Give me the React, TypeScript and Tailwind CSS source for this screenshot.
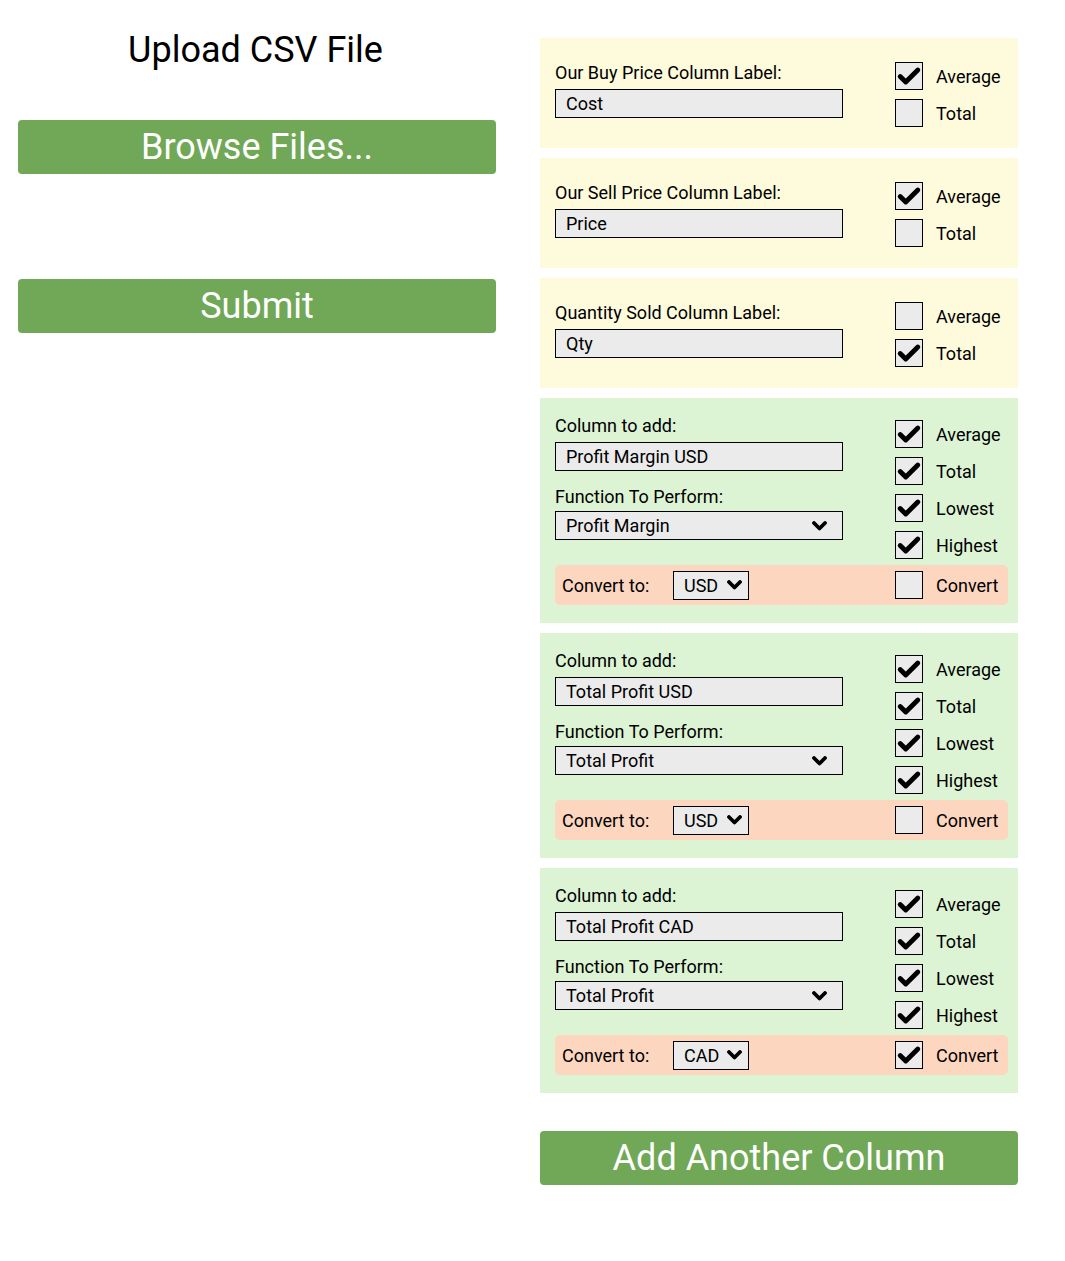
const simpleCols = [
  { label: "Our Buy Price Column Label:", value: "Cost", average: true, total: false },
  { label: "Our Sell Price Column Label:", value: "Price", average: true, total: false },
  { label: "Quantity Sold Column Label:", value: "Qty", average: false, total: true },
];

const addedCols = [
  { name: "Profit Margin USD", fn: "Profit Margin", currency: "USD", convert: false },
  { name: "Total Profit USD", fn: "Total Profit", currency: "USD", convert: false },
  { name: "Total Profit CAD", fn: "Total Profit", currency: "CAD", convert: true },
];

function Tick() {
  return (
    <svg width="28" height="28" viewBox="0 0 28 28" fill="none">
      <path d="M4.5 14.5 L10.5 20.5 L23.5 7.5" stroke="black" strokeWidth="5.2" strokeLinecap="round" strokeLinejoin="round" />
    </svg>
  );
}

function Chevron() {
  return (
    <svg width="15" height="10" viewBox="0 0 15 10" fill="none">
      <path d="M2 2 L7.5 7.5 L13 2" stroke="black" strokeWidth="3.8" strokeLinecap="round" strokeLinejoin="round" />
    </svg>
  );
}

function Check({ label, checked }: { label: string; checked: boolean }) {
  return (
    <div className="flex h-[28px] items-center gap-[13px]">
      <span className="flex h-[28px] w-[28px] items-center justify-center border border-black bg-[#ebebeb]">
        {checked && <Tick />}
      </span>
      <span className="text-[18px] leading-[21px]">{label}</span>
    </div>
  );
}

function TextBox({ value }: { value: string }) {
  return (
    <div className="flex h-[29px] w-[288px] items-center border border-black bg-[#ebebeb] pl-[10px] text-[18px]">
      {value}
    </div>
  );
}

function SelectBox({ value }: { value: string }) {
  return (
    <div className="flex h-[29px] w-[288px] items-center justify-between border border-black bg-[#ebebeb] pl-[10px] pr-[15px] text-[18px]">
      <span>{value}</span>
      <Chevron />
    </div>
  );
}

function GreenButton({ children }: { children: string }) {
  return (
    <button className="flex h-[54px] w-[478px] items-center justify-center rounded-[4px] bg-[#70a857] text-[36px] text-white">
      {children}
    </button>
  );
}

export default function App() {
  return (
    <div
      className="flex min-h-[1261px] w-[1065px] gap-[44px] bg-white pl-[18px] pt-[29px] text-black"
      style={{ fontFamily: "Roboto, 'Noto Sans', sans-serif" }}
    >
      {/* left: upload */}
      <div className="flex w-[478px] flex-col">
        <h1 className="pr-[3px] text-center text-[36px] leading-[42px] font-normal">Upload CSV File</h1>
        <div className="mt-[49px]">
          <GreenButton>Browse Files...</GreenButton>
        </div>
        <div className="mt-[105px]">
          <GreenButton>Submit</GreenButton>
        </div>
      </div>

      {/* right: column config */}
      <div className="flex w-[478px] flex-col gap-[10px] pt-[9px]">
        {simpleCols.map((c) => (
          <div key={c.label} className="flex h-[110px] bg-[#fefadc] pl-[15px] pt-[24px]">
            <div className="flex w-[288px] flex-col">
              <span className="text-[18px] leading-[21px]">{c.label}</span>
              <div className="mt-[6px]">
                <TextBox value={c.value} />
              </div>
            </div>
            <div className="ml-[52px] flex flex-col gap-[9px]">
              <Check label="Average" checked={c.average} />
              <Check label="Total" checked={c.total} />
            </div>
          </div>
        ))}

        {addedCols.map((c) => (
          <div key={c.name} className="flex h-[225px] flex-col bg-[#dcf4d4] pl-[15px] pr-[10px] pt-[17px]">
            <div className="flex">
              <div className="flex w-[288px] flex-col">
                <span className="text-[18px] leading-[21px]">Column to add:</span>
                <div className="mt-[6px]">
                  <TextBox value={c.name} />
                </div>
                <span className="mt-[15px] text-[18px] leading-[21px]">Function To Perform:</span>
                <div className="mt-[4px]">
                  <SelectBox value={c.fn} />
                </div>
              </div>
              <div className="ml-[52px] mt-[5px] flex flex-col gap-[9px]">
                <Check label="Average" checked />
                <Check label="Total" checked />
                <Check label="Lowest" checked />
                <Check label="Highest" checked />
              </div>
            </div>
            <div className="mt-[6px] flex h-[40px] items-center rounded-[5px] bg-[#fdd6c0] pl-[7px]">
              <div className="flex w-[333px] items-center">
                <span className="w-[111px] text-[18px]">Convert to:</span>
                <div className="flex h-[29px] w-[76px] items-center justify-between border border-black bg-[#ebebeb] pl-[10px] pr-[6px] text-[18px]">
                  <span>{c.currency}</span>
                  <Chevron />
                </div>
              </div>
              <Check label="Convert" checked={c.convert} />
            </div>
          </div>
        ))}

        <div className="mt-[28px]">
          <GreenButton>Add Another Column</GreenButton>
        </div>
      </div>
    </div>
  );
}
